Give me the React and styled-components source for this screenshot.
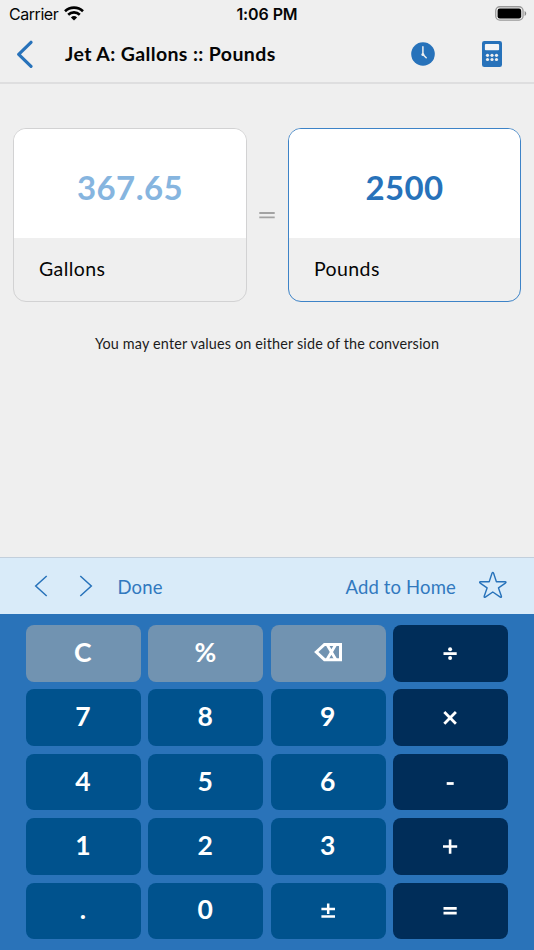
import React from 'react';
import styled, { createGlobalStyle } from 'styled-components';

const blue = '#2772ba';
const sans = 'Lato, "Open Sans", sans-serif';

const GlobalStyle = createGlobalStyle`
  *, *::before, *::after { box-sizing: border-box; }
  body { margin: 0; background: #efefef; }
  button { border: 0; margin: 0; padding: 0; background: none; font: inherit; color: inherit; }
  svg { display: block; flex: none; }
`;

const Screen = styled.div`
  width: 534px;
  height: 950px;
  display: flex;
  flex-direction: column;
  background: #efefef;
  color: #050505;
  font-family: ${sans};
  white-space: nowrap;
  overflow: hidden;
`;

const StatusBar = styled.div`
  height: 27px;
  display: grid;
  grid-template-columns: 1fr auto 1fr;
  align-items: center;
  padding: 0 7px 0 9px;
  font: 400 16px/26px Inter, sans-serif;
`;

const Carrier = styled.div`
  display: flex;
  align-items: center;
  gap: 6px;
  letter-spacing: -0.45px;
`;

const Time = styled.div`
  margin-right: 2px;
  font-weight: 600;
  letter-spacing: -0.1px;
`;

const Battery = styled.div`
  display: flex;
  justify-content: flex-end;
`;

const NavBar = styled.header`
  height: 57px;
  display: flex;
  align-items: center;
  padding: 0 32px 2px 16px;
  border-bottom: 2px solid #dededf;
`;

const Title = styled.h1`
  flex: 1;
  margin: 0 0 0 31px;
  font-size: 19.5px;
  font-weight: 700;
  line-height: 28px;
  letter-spacing: 0.38px;
`;

const NavActions = styled.div`
  display: flex;
  align-items: center;
  gap: 47px;
`;

const Main = styled.main`
  flex: 1;
  padding: 44px 13px 0;
`;

const Conversion = styled.div`
  display: grid;
  grid-template-columns: 234px 1fr 233px;
  align-items: center;
`;

const Card = styled.section`
  height: 174px;
  border: 1.5px solid ${(p) => (p.$active ? '#3d83c7' : '#d2d2d3')};
  border-radius: 13px;
  overflow: hidden;
  display: flex;
  flex-direction: column;
`;

const Value = styled.div`
  height: 109px;
  padding-top: 6px;
  background: #fff;
  display: flex;
  align-items: center;
  justify-content: center;
  font-size: 33px;
  font-weight: 700;
  letter-spacing: 0.4px;
  color: ${(p) => (p.$active ? blue : '#86b5df')};
`;

const Unit = styled.div`
  flex: 1;
  padding: 0 0 2px 25px;
  display: flex;
  align-items: center;
  font-size: 19.5px;
  letter-spacing: 0.4px;
`;

const Equals = styled.div`
  display: flex;
  justify-content: center;
  padding-right: 1px;
`;

const Hint = styled.p`
  margin: 32px 0 0;
  text-align: center;
  font-size: 14.4px;
  line-height: 20px;
  letter-spacing: 0.16px;
  color: #1c1c1c;
`;

const Toolbar = styled.div`
  height: 57px;
  display: flex;
  align-items: center;
  padding: 0 27px 0 34px;
  background: #d9ebf9;
  border-top: 1px solid #c2cfdc;
  color: #3179bf;
  font-size: 18.5px;
`;

const ToolbarArrow = styled.button`
  margin: 0 ${(p) => (p.$last ? 24.5 : 31)}px 0 0;
`;

const ToolbarText = styled.button`
  padding-top: 2px;
  letter-spacing: 0.15px;
`;

const Spacer = styled.div`
  flex: 1;
`;

const StarButton = styled.button`
  margin-left: 23px;
  padding-bottom: 2px;
`;

const Keypad = styled.div`
  height: 336px;
  padding: 10.7px 26px 10.6px;
  background: #2a73b9;
  display: grid;
  grid-template-columns: repeat(4, 1fr);
  grid-template-rows: repeat(5, 1fr);
  gap: 7.6px 7.8px;
`;

const keyColors = { fn: '#7193b1', digit: '#00528d', op: '#002d59' };

const Key = styled.button`
  display: flex;
  align-items: center;
  justify-content: center;
  padding: 0 1px 3px 0;
  border-radius: 8px;
  background: ${(p) => keyColors[p.$kind]};
  color: #fff;
  font-size: 26.5px;
  font-weight: 700;
`;

const stroke = { fill: 'none', stroke: '#fff', strokeWidth: 2.8 };

const Glyph = ({ children }) => (
  <svg width="28" height="24" viewBox="0 0 28 24">{children}</svg>
);

const glyphs = {
  back: (
    <Glyph>
      <path d="M2.300 12 10.500 4.500h16v15.200h-16Z" {...stroke} strokeWidth="3" />
      <path d="m13 4.500 8.800 15M21.800 4.500l-8.800 15" {...stroke} />
    </Glyph>
  ),
  divide: (
    <Glyph>
      <path d="M7.500 13.600h13.200" {...stroke} />
      <circle cx="14.100" cy="9.200" r="2" fill="#fff" />
      <circle cx="14.100" cy="18.100" r="2" fill="#fff" />
    </Glyph>
  ),
  times: (
    <Glyph>
      <path d="m8.300 8.100 11.600 11.600M19.900 8.100 8.300 19.700" {...stroke} />
    </Glyph>
  ),
  minus: (
    <Glyph>
      <path d="M10.700 14.500h7" {...stroke} />
    </Glyph>
  ),
  plus: (
    <Glyph>
      <path d="M7 13.500h14.200M14.100 6.400v14.300" {...stroke} strokeWidth="2.600" />
    </Glyph>
  ),
  plusminus: (
    <Glyph>
      <path d="M7.400 11.900H21M14.200 6.500v10.600M7.400 19.500H21" {...stroke} strokeWidth="2.500" />
    </Glyph>
  ),
  equal: (
    <Glyph>
      <path d="M7.500 11.300h13.200M7.500 16.200h13.200" {...stroke} />
    </Glyph>
  ),
};

const keys = [
  ['C', 'fn'], ['%', 'fn'], ['back', 'fn'], ['divide', 'op'],
  ['7', 'digit'], ['8', 'digit'], ['9', 'digit'], ['times', 'op'],
  ['4', 'digit'], ['5', 'digit'], ['6', 'digit'], ['minus', 'op'],
  ['1', 'digit'], ['2', 'digit'], ['3', 'digit'], ['plus', 'op'],
  ['.', 'digit'], ['0', 'digit'], ['plusminus', 'digit'], ['equal', 'op'],
];

const WifiIcon = () => (
  <svg width="20" height="15" viewBox="0 0 20 15" fill="none" stroke="#000" strokeWidth="2.600">
    <path d="M1 5.200a13 13 0 0 1 18 0" />
    <path d="M4.200 8.700a8.300 8.300 0 0 1 11.600 0" />
    <path d="M10 14.500 6.900 11.400a4.500 4.500 0 0 1 6.200 0Z" fill="#000" stroke="none" />
  </svg>
);

const BatteryIcon = () => (
  <svg width="32" height="15" viewBox="0 0 32 15">
    <rect x=".75" y=".75" width="27.300" height="13.300" rx="4" fill="none" stroke="#999" strokeWidth="1.300" />
    <rect x="2.600" y="2.500" width="23.600" height="9.900" rx="2.200" />
    <path d="M29.600 5v5c1-.4 1.600-1.400 1.600-2.500S30.600 5.400 29.600 5Z" fill="#888" />
  </svg>
);

const BackIcon = () => (
  <svg width="18" height="28" viewBox="0 0 18 28" fill="none" stroke={blue} strokeWidth="3.200" strokeLinecap="round" strokeLinejoin="round">
    <path d="M15 2.300 2.700 14.300 15 26.300" />
  </svg>
);

const ClockIcon = () => (
  <svg width="24" height="24" viewBox="0 0 24 24">
    <circle cx="12" cy="12" r="11.800" fill={blue} />
    <path d="M11.900 4.700v7.800l3.300 3.200" fill="none" stroke="#efefef" strokeWidth="1.500" strokeLinecap="round" />
    <circle cx="11.900" cy="12.500" r="1.500" fill="#efefef" />
  </svg>
);

const CalculatorIcon = () => (
  <svg width="20" height="26" viewBox="0 0 20 26">
    <rect width="20" height="26" rx="2.300" fill={blue} />
    <rect x="2.900" y="2.900" width="14.200" height="6.400" rx="1" fill="#f4f5f6" />
    <g fill="#efefef">
      {[14.300, 18.500].map((y) => [5.500, 10, 14.500].map((x) => (
        <circle key={`${x}-${y}`} cx={x} cy={y} r="1.600" />
      )))}
    </g>
  </svg>
);

const ChevronIcon = ({ d }) => (
  <svg width="14" height="24" viewBox="0 0 14 24" fill="none" stroke={blue} strokeWidth="1.500">
    <path d={d} />
  </svg>
);

const StarIcon = () => (
  <svg width="28" height="28" viewBox="0 0 28 28" fill="none" stroke={blue} strokeWidth="1.400" strokeLinejoin="round">
    <path d="M13 2.300q.8-1.800 1.600 0l2.800 8.400h8.700q1.600.2.300 1.400l-6.900 4.800 2.900 8.400q.2 1.500-1.100.9L13.800 21l-7.500 5.200q-1.300.6-1.100-.9l2.900-8.400-6.900-4.800q-1.300-1.200.3-1.400h8.700Z" />
  </svg>
);

export default function App() {
  return (
    <Screen>
      <GlobalStyle />
      <StatusBar>
        <Carrier>Carrier<WifiIcon /></Carrier>
        <Time>1:06 PM</Time>
        <Battery><BatteryIcon /></Battery>
      </StatusBar>
      <NavBar>
        <button aria-label="Back"><BackIcon /></button>
        <Title>Jet A: Gallons :: Pounds</Title>
        <NavActions>
          <button aria-label="History"><ClockIcon /></button>
          <button aria-label="Calculator"><CalculatorIcon /></button>
        </NavActions>
      </NavBar>
      <Main>
        <Conversion>
          <Card>
            <Value>367.65</Value>
            <Unit>Gallons</Unit>
          </Card>
          <Equals>
            <svg width="16" height="8" viewBox="0 0 16 8" stroke="#a3a3a3" strokeWidth="1.800">
              <path d="M.3 2h15.400M.3 6.400h15.400" />
            </svg>
          </Equals>
          <Card $active>
            <Value $active>2500</Value>
            <Unit>Pounds</Unit>
          </Card>
        </Conversion>
        <Hint>You may enter values on either side of the conversion</Hint>
      </Main>
      <Toolbar>
        <ToolbarArrow aria-label="Previous"><ChevronIcon d="M12.700 2 1.700 12l11 10" /></ToolbarArrow>
        <ToolbarArrow $last aria-label="Next"><ChevronIcon d="m1.300 2 11 10-11 10" /></ToolbarArrow>
        <ToolbarText>Done</ToolbarText>
        <Spacer />
        <ToolbarText>Add to Home</ToolbarText>
        <StarButton aria-label="Favorite"><StarIcon /></StarButton>
      </Toolbar>
      <Keypad>
        {keys.map(([label, kind]) => (
          <Key key={label} $kind={kind} aria-label={label}>{glyphs[label] || label}</Key>
        ))}
      </Keypad>
    </Screen>
  );
}
